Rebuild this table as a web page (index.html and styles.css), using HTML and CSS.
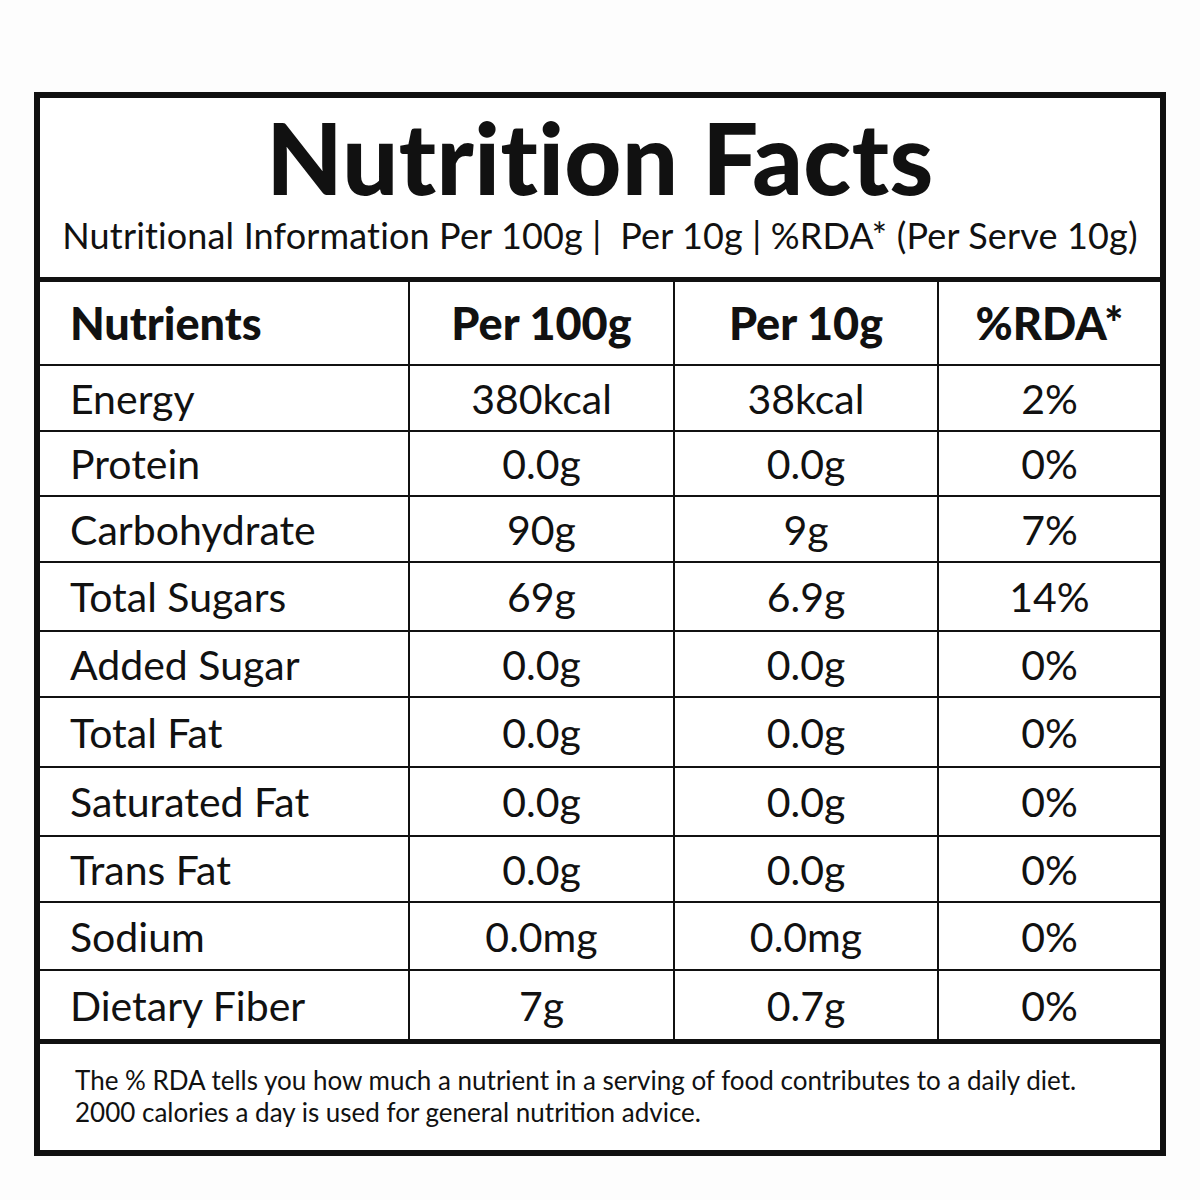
FILE: index.html
```html
<!DOCTYPE html>
<html lang="en">
<head>
<meta charset="utf-8">
<title>Nutrition Facts</title>
<link rel="stylesheet" href="styles.css">
</head>
<body>
<div class="label">
  <header class="head">
    <h1 class="title">Nutrition Facts</h1>
    <p class="subtitle">Nutritional Information Per 100g |&nbsp; Per 10g | %RDA* (Per Serve 10g)</p>
  </header>
  <div class="grid">
    <div class="cell name th">Nutrients</div>
    <div class="cell th">Per 100g</div>
    <div class="cell th">Per 10g</div>
    <div class="cell th">%RDA*</div>

    <div class="cell name">Energy</div>
    <div class="cell">380kcal</div>
    <div class="cell">38kcal</div>
    <div class="cell">2%</div>

    <div class="cell name">Protein</div>
    <div class="cell">0.0g</div>
    <div class="cell">0.0g</div>
    <div class="cell">0%</div>

    <div class="cell name">Carbohydrate</div>
    <div class="cell">90g</div>
    <div class="cell">9g</div>
    <div class="cell">7%</div>

    <div class="cell name">Total Sugars</div>
    <div class="cell">69g</div>
    <div class="cell">6.9g</div>
    <div class="cell">14%</div>

    <div class="cell name">Added Sugar</div>
    <div class="cell">0.0g</div>
    <div class="cell">0.0g</div>
    <div class="cell">0%</div>

    <div class="cell name">Total Fat</div>
    <div class="cell">0.0g</div>
    <div class="cell">0.0g</div>
    <div class="cell">0%</div>

    <div class="cell name">Saturated Fat</div>
    <div class="cell">0.0g</div>
    <div class="cell">0.0g</div>
    <div class="cell">0%</div>

    <div class="cell name">Trans Fat</div>
    <div class="cell">0.0g</div>
    <div class="cell">0.0g</div>
    <div class="cell">0%</div>

    <div class="cell name">Sodium</div>
    <div class="cell">0.0mg</div>
    <div class="cell">0.0mg</div>
    <div class="cell">0%</div>

    <div class="cell name">Dietary Fiber</div>
    <div class="cell">7g</div>
    <div class="cell">0.7g</div>
    <div class="cell">0%</div>
  </div>
  <footer class="foot">
    <p>The % RDA tells you how much a nutrient in a serving of food contributes to a daily diet.<br>2000 calories a day is used for general nutrition advice.</p>
  </footer>
</div>
</body>
</html>
```

FILE: styles.css
```css
html, body {
  margin: 0;
  padding: 0;
  background: #fdfdfd;
}
body {
  padding: 92px 0 0 34px;
  color: #111;
  font-family: "Lato", "Liberation Sans", sans-serif;
}
.label {
  width: 1120px;
  border: 6px solid #111;
  background: #fff;
}
.head {
  height: 184px;
  border-bottom: 5px solid #111;
  display: flex;
  flex-direction: column;
  align-items: center;
  box-sizing: border-box;
  padding-top: 3px;
}
.title {
  margin: 0;
  font-size: 99px;
  font-weight: 900;
  line-height: 112px;
  letter-spacing: 0.4px;
}
.subtitle {
  margin: 0;
  font-size: 36px;
  font-weight: 400;
  line-height: 44px;
  letter-spacing: 0.15px;
}
.grid {
  display: grid;
  grid-template-columns: 368px 263px 262px 221px;
  grid-template-rows: 82px 64px 63px 64px 67px 64px 68px 67px 64px 66px 68px;
  gap: 2px;
  background: #111;
}
.cell {
  background: #fff;
  display: flex;
  align-items: center;
  justify-content: center;
  font-size: 41px;
  font-weight: 400;
}
.cell.name {
  justify-content: flex-start;
  padding-left: 30px;
}
.cell.th {
  font-size: 45px;
  font-weight: 900;
}
.foot {
  height: 111px;
  border-top: 5px solid #111;
  box-sizing: border-box;
  padding: 20px 0 0 35px;
}
.foot p {
  margin: 0;
  font-size: 26px;
  line-height: 32px;
}
```
